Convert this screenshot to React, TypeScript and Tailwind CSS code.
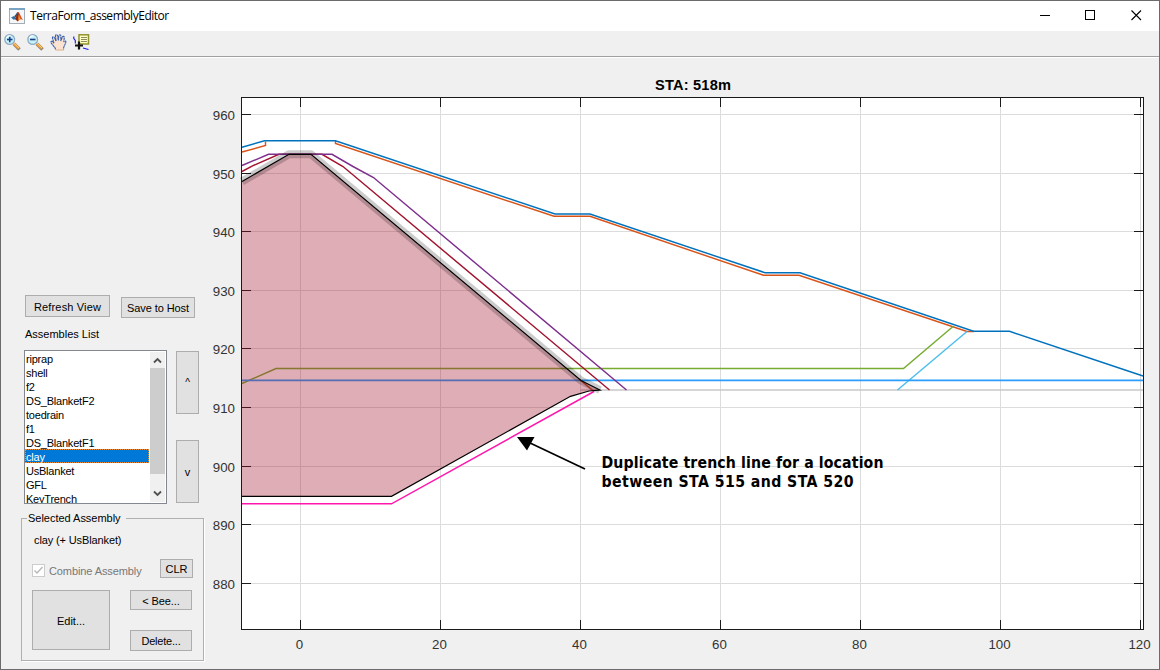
import React from "react";

const items = [
  "riprap", "shell", "f2", "DS_BlanketF2", "toedrain", "f1",
  "DS_BlanketF1", "clay", "UsBlanket", "GFL", "KeyTrench",
];

const yTicks: [number, number][] = [
  [960, 114.5], [950, 173], [940, 231.5], [930, 290.5], [920, 348.5],
  [910, 407.5], [900, 466.5], [890, 524.5], [880, 583.5],
];
const xTicks: [number, number][] = [
  [0, 300.5], [20, 440.5], [40, 580.5], [60, 720.5], [80, 860.5], [100, 1000.5], [120, 1140.5],
];

function Btn({ className = "", children }: { className?: string; children: React.ReactNode }) {
  return (
    <button className={`flex shrink-0 items-center justify-center whitespace-nowrap border border-[#adadad] bg-[#e1e1e1] pt-[2px] leading-none ${className}`}>
      {children}
    </button>
  );
}

function MatlabIcon() {
  return (
    <svg width="16" height="16" viewBox="0 0 16 16">
      <rect x=".5" y=".5" width="15" height="15" fill="#f4f6f7" stroke="#a3adb5" />
      <rect x="0" y="0" width="16" height="2" fill="#7ba3c2" />
      <path d="M2 9.500 5 8l2 2-2 2z" fill="#2f6fa8" />
      <path d="M5 8c2-.5 2.500-4 4-4L7.500 10z" fill="#27526f" />
      <path d="M9 4c1.500 0 3 5 5 8-2-1.500-3.500-1-5 1.500L6 11c1-1 2-5 3-7z" fill="#d6521d" />
      <path d="M9 4c1 1 .8 5 0 9.500L6 11c1-1 2-5 3-7z" fill="#8e2a18" />
      <path d="M9.500 7c1 2 1.500 3 2 4l-2 1.500z" fill="#f6a531" />
    </svg>
  );
}

function ZoomIcon({ plus }: { plus?: boolean }) {
  return (
    <svg width="17" height="17" viewBox="0 0 17 17">
      <path d="m10 10 5.500 5.500" stroke="#888" strokeWidth="3.600" />
      <path d="m9.700 9.500 5.300 5" stroke="#e79a36" strokeWidth="2.800" />
      <path d="m10 9.200 5 4.800" stroke="#ffd391" strokeWidth=".9" />
      <circle cx="5.700" cy="5.500" r="4.900" fill="#c5f0f8" stroke="#8aa9c4" strokeWidth="1.200" />
      <path d="M2.500 4C3.500 2 5 1.800 6.500 2" stroke="#fff" strokeWidth="1.200" fill="none" />
      <path d="M3 5.500h5.500" stroke="#193f83" strokeWidth="1.600" />
      {plus && <path d="M5.750 2.800v5.500" stroke="#193f83" strokeWidth="1.600" />}
    </svg>
  );
}

function HandIcon() {
  return (
    <svg width="17" height="17" viewBox="0 0 17 17">
      <path
        d="M5.500 15.500c0-2-2-3-3.500-5.500C.8 8.500.5 7.500 1.500 7.200c1-.2 1.800 1.300 2.500 2L2.500 4.500C2 2.500 3.800 2 4.500 3.800L6 7 5.500 2C5.600.3 7.300.4 7.700 2l.6 4.500.5-4.700C9.200.3 10.800.6 10.900 2L10.800 7l1.500-3.800c.6-1.400 2.200-1 2 .4L13.800 8c1-1.500 2.300-1.200 2 .2-.6 2.800-2.300 3.800-2.300 7.300"
        fill="#fbe3cf" stroke="#365fae" strokeWidth="1.100" strokeDasharray="2.500 .4"
      />
      <path d="M5.500 16h8" stroke="#dcae86" />
    </svg>
  );
}

function DataTipIcon() {
  return (
    <svg width="17" height="17" viewBox="0 0 17 17">
      <path d="M.8 2.500v2l1.500 2v3M10 14l5.500 1.500" stroke="#1515e8" fill="none" strokeWidth="1.100" />
      <rect x="6" y=".8" width="9.500" height="9.200" fill="#ffffc4" stroke="#91912e" strokeWidth="1.500" />
      <path d="M8 3.500h6M8 5.500h6M8 7.500h6" stroke="#8b8b62" />
      <path d="M6 7.500v8M2 11.500h8" stroke="#111" strokeWidth="2.200" />
    </svg>
  );
}

function SidePanel() {
  return (
    <aside className="flex w-[203px] shrink-0 flex-col">
      <div className="mt-[237px] flex pl-6">
        <Btn className="h-[22px] w-[85px] tracking-[0.15px]">Refresh View</Btn>
        <Btn className="ml-[11px] mt-[2px] h-[21px] w-[74px] tracking-[-0.08px]">Save to Host</Btn>
      </div>
      <div className="mt-[8px] h-4 pl-6 leading-4">Assembles List</div>
      <div className="mt-[8px] flex pl-[23px]">
        <div className="flex h-[154px] w-[143px] border border-[#828790] bg-white">
          <ul className="w-[124px] overflow-hidden">
            {items.map((name) => (
              <li
                key={name}
                className={`h-[14px] pl-px pt-px leading-[14px] tracking-[-0.22px] ${name === "clay" ? "bg-[#0078d7] text-white outline-1 -outline-offset-1 outline-dotted outline-[#e58b35]" : ""}`}
              >
                {name}
              </li>
            ))}
          </ul>
          <div className="ml-px mt-px flex h-[150px] w-[15px] flex-col justify-between bg-[#f0f0f0]">
            <svg width="15" height="16"><path d="m4 10.500 3.500-3.500 3.500 3.500" fill="none" stroke="#505050" strokeWidth="1.800" /></svg>
            <div className="h-[106px] bg-[#cdcdcd]" />
            <svg className="mt-auto" width="15" height="16"><path d="m4 5.500 3.500 3.500L11 5.500" fill="none" stroke="#505050" strokeWidth="1.800" /></svg>
          </div>
        </div>
        <div className="ml-[9px] mt-px flex flex-col gap-[26px]">
          <Btn className="h-[63px] w-[23px] pb-[2px] text-[10px]">^</Btn>
          <Btn className="h-[63px] w-[23px] pb-px">v</Btn>
        </div>
      </div>

      <fieldset className="ml-5 mt-[8px] h-[149px] w-[182px] border border-[#b0b0b0] px-[10px] shadow-[1px_1px_0_#fff]">
        <legend className="-ml-[5px] h-3 pl-px pr-[5px] leading-3 tracking-[-0.02px]">Selected Assembly</legend>
        <div className="mt-[8px] h-4 pl-[2px] leading-4 tracking-[-0.12px]">clay (+ UsBlanket)</div>
        <div className="mt-[11px] flex h-[19px]">
          <span className="mt-[5px] flex size-[13px] items-center justify-center border border-[#cccccc] bg-white">
            <svg width="11" height="11"><path d="m1.500 5.500 2.500 2.500 5.500-6" fill="none" stroke="#b8b8b8" strokeWidth="1.400" /></svg>
          </span>
          <span className="ml-[4px] mt-[6px] w-[96px] whitespace-nowrap leading-[13px] tracking-[-0.1px] text-[#777]">Combine Assembly</span>
          <Btn className="ml-[15px] h-[19px] w-[33px]">CLR</Btn>
        </div>
        <div className="mt-3 flex">
          <Btn className="h-[60px] w-[78px]">Edit...</Btn>
          <div className="ml-5 flex flex-col gap-5">
            <Btn className="h-[20px] w-[62px] tracking-[-0.1px]">&lt; Bee...</Btn>
            <Btn className="h-[21px] w-[62px] tracking-[-0.2px]">Delete...</Btn>
          </div>
        </div>
      </fieldset>
    </aside>
  );
}

function CrossSection() {
  return (
    <svg className="shrink-0" width="955" height="611" viewBox="204 58 955 611">
      <rect x="241.500" y="97.500" width="902" height="532" fill="#fff" />
      <g stroke="#dcdcdc" shapeRendering="crispEdges">
        {yTicks.map(([v, y]) => <path key={v} d={`M242 ${y}H1143`} />)}
        {xTicks.map(([v, x]) => <path key={v} d={`M${x} 98V629`} />)}
      </g>
      <g stroke="#1a1a1a" fill="none" shapeRendering="crispEdges">
        <rect x="241.500" y="97.500" width="902" height="532" />
        {yTicks.map(([v, y]) => <path key={v} d={`M242 ${y}h9M1134 ${y}h9`} />)}
        {xTicks.map(([v, x]) => <path key={v} d={`M${x} 98v9M${x} 620v9`} />)}
      </g>
      <g fill="none" strokeWidth="1.450">
        <path d="M580 390H1143" stroke="#c8c8c8" />
        <path d="M242 152 265.500 145.500V141.500M335.500 141V143.500L554 216.300H590L763.500 275.300H799L967 331.500H974" stroke="#d95319" />
        <path d="M242 147.300 264.500 140.700H335.500L555 214H590L765 272.700H800L973.500 331.300H1009.500L1143 376" stroke="#0072bd" />
        <path d="M242 383.500 276 368.500H903.500L953 326.500" stroke="#77ac30" />
        <path d="M897.500 390 967 331.500" stroke="#4dbeee" />
        <path d="M242 380.300H1143" stroke="#2b9dfa" strokeWidth="1.700" />
        <path d="M242 171.500 253 165.700 279 154.300H322L343 166.500 609.500 390" stroke="#a2142f" />
        <path d="M242 165.500 268.500 154.300H332L353 166.500 373.500 177.500 626.500 390" stroke="#7e2f8e" />
        <path d="M579 379 594 391.500" stroke="#d95319" />
        <path d="M242 503.800H391.500L594 391.500" stroke="#ff16ac" />
      </g>
      <path d="M242 181.500 289 154.300H311L581 380.500 600 390 589 391 570.500 396.300 391.500 496.300H242Z" fill="#a2142f" fillOpacity=".35" />
      <path d="M242 181.500 289 154.300H311L581 380.500 600 390" fill="none" stroke="#000" strokeOpacity=".2" strokeWidth="8" strokeLinejoin="round" />
      <path d="M242 181.500 289 154.300H311L581 380.500 600 390 589 391 570.500 396.300 391.500 496.300H242" fill="none" stroke="#000" strokeWidth="1.200" />
      <path d="M528 442 585 469" stroke="#000" strokeWidth="1.700" />
      <path d="M517 437H534.500L527 450.500Z" fill="#000" />
      <g fill="#333" fontFamily="'Liberation Sans', Arial, sans-serif" fontSize="13.300">
        {yTicks.map(([v, y]) => <text key={v} x="235" y={y + 5.500} textAnchor="end">{v}</text>)}
        {xTicks.map(([v, x]) => <text key={v} x={x - 1} y="649" textAnchor="middle">{v}</text>)}
      </g>
      <text x="693" y="90" textAnchor="middle" fontFamily="'Liberation Sans', Arial, sans-serif" fontSize="14.600" fontWeight="700" textLength="76">STA: 518m</text>
      <g fontFamily="'DejaVu Sans Condensed', 'DejaVu Sans', sans-serif" fontSize="15.700" fontWeight="700" fontStretch="condensed">
        <text x="601.500" y="468" textLength="282" lengthAdjust="spacing">Duplicate trench line for a location</text>
        <text x="601.500" y="487" textLength="252" lengthAdjust="spacing">between STA 515 and STA 520</text>
      </g>
    </svg>
  );
}

export default function App() {
  return (
    <div className="flex h-[670px] w-[1160px] flex-col overflow-hidden border border-[#6b6b6b] bg-[#f0f0f0] font-['Liberation_Sans',Arial,sans-serif] text-[11px] text-black">
      <header className="flex h-[30px] shrink-0 items-center bg-white pl-2">
        <MatlabIcon />
        <h1 className="ml-[5px] font-['Open_Sans','Noto_Sans',sans-serif] text-[12px] leading-none tracking-[-0.48px]">TerraForm_assemblyEditor</h1>
        <div className="ml-auto flex items-center gap-[34px] pr-[17px]">
          <svg width="11" height="12"><path d="M0 5.500h10" stroke="#000" /></svg>
          <svg width="12" height="12"><rect x=".5" y=".5" width="9" height="9" fill="none" stroke="#000" /></svg>
          <svg width="11" height="12"><path d="m.5.5 9.500 9.500M10 .5.500 10" stroke="#000" strokeWidth="1.100" /></svg>
        </div>
      </header>
      <nav className="flex h-[27px] shrink-0 gap-[6px] border-b border-white pl-[3px] pt-[3px] shadow-[inset_0_-1px_0_#a0a0a0]">
        <ZoomIcon plus />
        <ZoomIcon />
        <HandIcon />
        <DataTipIcon />
      </nav>
      <main className="flex min-h-0 flex-1">
        <SidePanel />
        <CrossSection />
      </main>
    </div>
  );
}
